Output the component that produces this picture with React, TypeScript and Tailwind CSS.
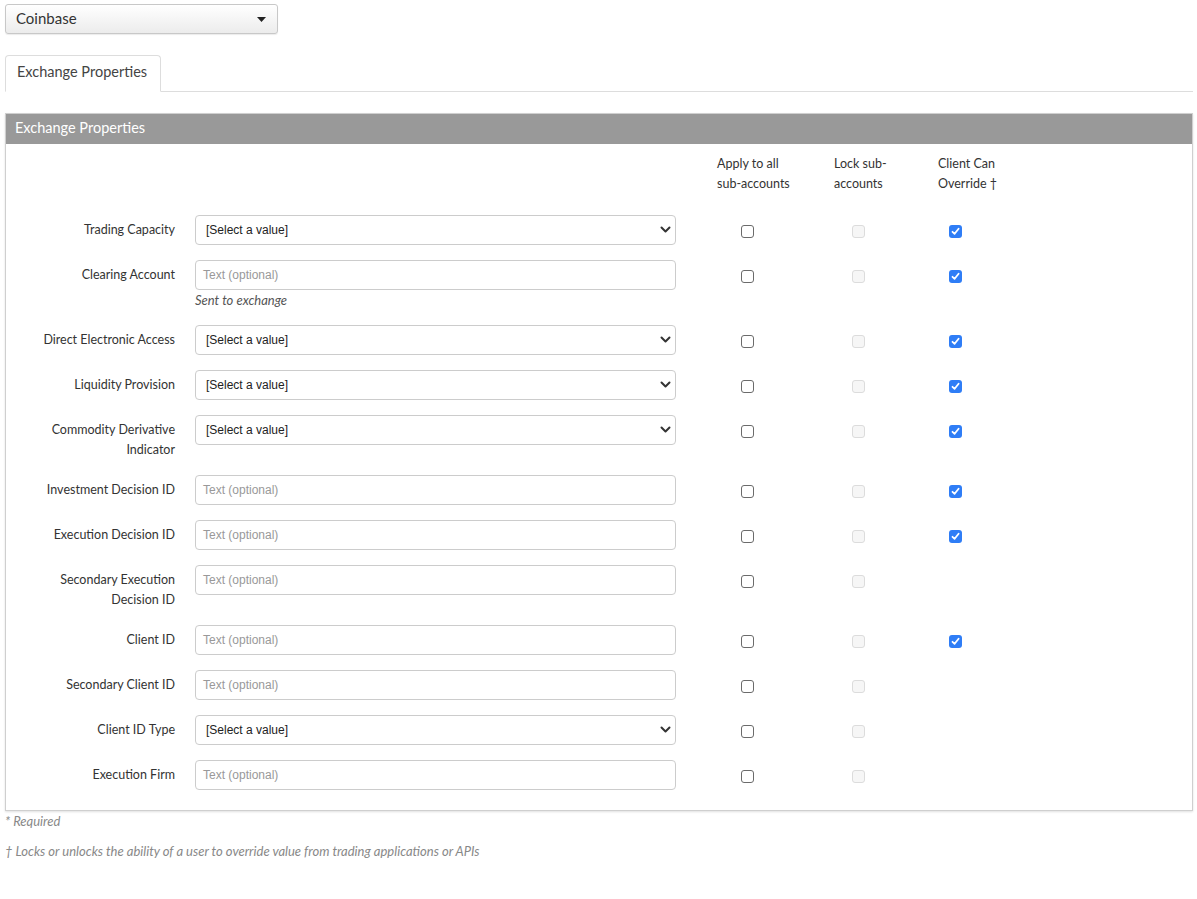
import React from "react";

type Row = {
  label: React.ReactNode;
  kind: "select" | "text";
  help?: string;
  override: boolean;
};

const rows: Row[] = [
  { label: "Trading Capacity", kind: "select", override: true },
  { label: "Clearing Account", kind: "text", help: "Sent to exchange", override: true },
  { label: "Direct Electronic Access", kind: "select", override: true },
  { label: "Liquidity Provision", kind: "select", override: true },
  { label: <>Commodity Derivative<br />Indicator</>, kind: "select", override: true },
  { label: "Investment Decision ID", kind: "text", override: true },
  { label: "Execution Decision ID", kind: "text", override: true },
  { label: <>Secondary Execution<br />Decision ID</>, kind: "text", override: false },
  { label: "Client ID", kind: "text", override: true },
  { label: "Secondary Client ID", kind: "text", override: false },
  { label: "Client ID Type", kind: "select", override: false },
  { label: "Execution Firm", kind: "text", override: false },
];

const labelFont = { fontFamily: "Lato, 'Open Sans', sans-serif" };
const inputFont = { fontFamily: "'Liberation Sans', Arial, sans-serif" };

function Chevron() {
  return (
    <svg width="11" height="8" viewBox="0 0 11 8" className="text-[#333]">
      <path d="M1.5 1.5 L5.5 5.5 L9.5 1.5" fill="none" stroke="currentColor" strokeWidth="2" strokeLinecap="round" strokeLinejoin="round" />
    </svg>
  );
}

function Box({ state }: { state: "off" | "disabled" | "on" }) {
  if (state === "on")
    return (
      <div className="w-[13px] h-[13px] rounded-[3px] bg-[#2f7df6] flex items-center justify-center">
        <svg width="9" height="9" viewBox="0 0 9 9">
          <path d="M1.5 4.8 L3.6 6.8 L7.6 1.8" fill="none" stroke="white" strokeWidth="1.8" strokeLinecap="round" strokeLinejoin="round" />
        </svg>
      </div>
    );
  if (state === "disabled")
    return <div className="w-[13px] h-[13px] rounded-[3px] border border-[#dcdcdc] bg-[#f6f6f6]" />;
  return <div className="w-[13px] h-[13px] rounded-[3px] border border-[#6b6b6b] bg-white" />;
}

export default function App() {
  return (
    <div className="bg-white min-h-[899px] w-[1197px] pl-[5px] pr-[4px] pt-[4px] text-[#333]" style={labelFont}>
      {/* top dropdown */}
      <div className="w-[273px] h-[30px] rounded-[3px] border border-[#c8c8c8] bg-gradient-to-b from-white to-[#ececec] shadow-[0_1px_1px_rgba(0,0,0,0.08)] flex items-center justify-between pl-[10px] pr-[11px] pb-[2px]">
        <span className="text-[15px] text-[#333]">Coinbase</span>
        <svg width="9" height="5" viewBox="0 0 9 5" className="mt-[2px]">
          <path d="M0 0 L9 0 L4.5 5 Z" fill="#222" />
        </svg>
      </div>

      {/* tabs */}
      <div className="mt-[21px] border-b border-[#dddddd] flex w-[1188px]">
        <div className="w-[156px] h-[37px] -mb-px border border-[#dddddd] border-b-white rounded-t-[4px] bg-white flex items-center pl-[11px] pb-[3px] text-[14.5px] text-[#444]">
          Exchange Properties
        </div>
      </div>

      {/* panel */}
      <div className="mt-[21px] w-[1188px] border border-[#cfcfcf] shadow-[0_1px_2px_rgba(0,0,0,0.12)]">
        <div className="h-[30px] bg-[#999999] flex items-center pl-[9px] pb-[3px] text-[14.5px] text-white">Exchange Properties</div>
        <div className="pt-[10px] pb-[5px] text-[12.5px] leading-[20px]">
          {/* column headers */}
          <div className="flex h-[40px] mb-[21px]">
            <div className="w-[169px]" />
            <div className="w-[480px] ml-[20px]" />
            <div className="ml-[42px] w-[117px]">Apply to all<br />sub-accounts</div>
            <div className="w-[104px]">Lock sub-<br />accounts</div>
            <div>Client Can<br />Override †</div>
          </div>

          {rows.map((r, i) => (
            <div key={i} className="flex items-start mb-[15px]">
              <div className="w-[169px] text-right pt-[5px] whitespace-nowrap text-[#333]">{r.label}</div>
              <div className="w-[480px] ml-[20px]">
                {r.kind === "select" ? (
                  <div className="h-[30px] w-[481px] rounded-[4px] border border-[#cccccc] bg-white flex items-center justify-between pl-[10px] pr-[4px]" style={inputFont}>
                    <span className="text-[12px] text-[#222]">[Select a value]</span>
                    <Chevron />
                  </div>
                ) : (
                  <div className="h-[30px] w-[481px] rounded-[4px] border border-[#cccccc] bg-white flex items-center pl-[7px]" style={inputFont}>
                    <span className="text-[12px] text-[#999]">Text (optional)</span>
                  </div>
                )}
                {r.help && <div className="italic text-[#555] text-[13px] leading-[20px]">{r.help}</div>}
              </div>
              <div className="ml-[42px] w-[117px] h-[30px] flex items-center pl-[24px] pt-[2px]">
                <Box state="off" />
              </div>
              <div className="w-[104px] h-[30px] flex items-center pl-[18px] pt-[2px]">
                <Box state="disabled" />
              </div>
              <div className="h-[30px] flex items-center pl-[11px] pt-[2px]">
                {r.override && <Box state="on" />}
              </div>
            </div>
          ))}
        </div>
      </div>

      {/* footer notes */}
      <div className="italic text-[13px] leading-[20px] text-[#888]">* Required</div>
      <div className="mt-[10px] italic text-[13px] leading-[20px] text-[#888]">† Locks or unlocks the ability of a user to override value from trading applications or APIs</div>
    </div>
  );
}
